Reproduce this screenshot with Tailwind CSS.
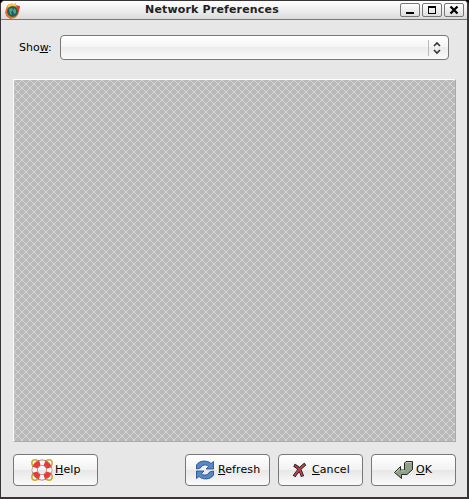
<!DOCTYPE html>
<html lang="en">
<head>
<meta charset="utf-8">
<title>Network Preferences</title>
<script src="https://cdn.jsdelivr.net/npm/@tailwindcss/browser@4"></script>
</head>
<body class="bg-black overflow-hidden text-black text-[11px] leading-[14px] font-['DejaVu_Sans',sans-serif]">
<div class="w-[469px] h-[499px] flex flex-col border border-r-2 border-b-2 border-[#393536] rounded-t-[5px] bg-[#e7e7e7] overflow-hidden">
  <header class="relative h-[19px] shrink-0 flex items-center justify-between pl-1 pr-[3px] border-b border-[#777] bg-linear-to-b from-white via-[#eeeeee] to-[#dadada]">
    <svg class="w-4 h-4 mt-px" viewBox="0 0 16 16">
      <path d="M2 3l2-2 1 1 2-2 1 2 3-2v2l4 1-1 5-1 4-3 3-5 1-4-3-1-4z" fill="#e8732c"/>
      <path d="M2 4l2-3 1 1 2-2 1 2 3-2v3l-4 1z" fill="#f2c94a"/>
      <path d="M12 3l3 0-1 4-1 4-3 3z" fill="#e43d30"/>
      <circle cx="7.5" cy="8.500" r="5" fill="#17615f" stroke="#49602e"/>
      <path d="M4 6l3-1 1 2-2 2 1 3-2-1zM9 5l2 2 0 3-2 1-1-3z" fill="#52a293"/>
    </svg>
    <h1 class="absolute left-[144px] top-[2px] font-bold whitespace-nowrap text-[#222] tracking-[0.17px]">Network Preferences</h1>
    <div class="flex gap-[2px]">
      <button class="w-5 h-[14px] rounded-[2px] border border-[#777] bg-linear-to-b from-white to-[#dedede] flex justify-center"><svg class="w-[18px] h-3 shrink-0" viewBox="0 0 18 12" shape-rendering="crispEdges"><path d="M5 8h8v2H5z"/></svg></button>
      <button class="w-5 h-[14px] rounded-[2px] border border-[#777] bg-linear-to-b from-white to-[#dedede] flex justify-center"><svg class="w-[18px] h-3 shrink-0" viewBox="0 0 18 12" shape-rendering="crispEdges"><path fill-rule="evenodd" d="M5 2h8v8H5zM6 4v5h6V4z"/></svg></button>
      <button class="w-5 h-[14px] rounded-[2px] border border-[#777] bg-linear-to-b from-white to-[#dedede] flex justify-center"><svg class="w-[18px] h-3 shrink-0" viewBox="0 0 18 12"><path d="M5.500 2.500l7 7M12.500 2.500l-7 7" stroke="#000" stroke-width="2.300"/></svg></button>
    </div>
  </header>
  <main class="flex-1 flex flex-col px-3 pt-[15px]">
    <div class="flex items-center h-[25px] pl-[6px] pr-[6px]">
      <label class="w-[41px] shrink-0">Sho<u class="underline-offset-1">w</u>:</label>
      <div class="h-[25px] flex-1 rounded-[4px] border border-[#777] bg-[linear-gradient(#fff,#f4f4f4_50%,#ececec_50%,#fafafa)] flex items-center justify-end">
        <span class="h-4 w-px bg-[#bbb]"></span>
        <svg class="w-[18px] h-4 mr-px" viewBox="0 0 18 16" fill="none" stroke="#333" stroke-width="1.600"><path d="M5 6l3-3 3 3M5 10l3 3 3-3"/></svg>
      </div>
    </div>
    <div class="mt-[19px] w-[443px] h-[363px] border-t border-l border-white border-r border-b border-r-[#aaa] border-b-[#aaa]">
      <svg class="block w-full h-full" shape-rendering="crispEdges">
        <defs><pattern id="mesh" width="8" height="8" patternUnits="userSpaceOnUse">
          <rect width="8" height="8" fill="#b9b9b9"/>
          <path fill="#d7d7d7" d="M0 0h1v1H0zM1 1h1v1H1zM2 2h1v1H2zM3 3h1v1H3zM4 4h1v1H4zM5 5h1v1H5zM6 6h1v1H6zM7 7h1v1H7zM7 0h1v1H7zM6 1h1v1H6zM5 2h1v1H5zM4 3h1v1H4zM3 4h1v1H3zM2 5h1v1H2zM1 6h1v1H1zM0 7h1v1H0z"/>
        </pattern></defs>
        <rect width="100%" height="100%" fill="url(#mesh)"/>
      </svg>
    </div>
    <footer class="flex mt-[12px] w-[443px] tracking-[0.1px]">
      <button class="w-[85px] shrink-0 h-8 rounded-[4px] border border-[#777] bg-[linear-gradient(#fff,#f2f2f2_50%,#e7e7e7_50%,#fafafa)] flex items-center pl-[17px] gap-[2px]">
        <svg class="w-[22px] h-[22px] shrink-0" viewBox="0 0 22 22" fill="none">
          <g stroke="#d0ab25" stroke-width="1.500"><circle cx="4" cy="4" r="3.200"/><circle cx="18" cy="4" r="3.200"/><circle cx="4" cy="18" r="3.200"/><circle cx="18" cy="18" r="3.200"/></g>
          <circle cx="11" cy="11" r="7.300" stroke="#8c7775" stroke-width="6.200"/>
          <circle cx="11" cy="11" r="7.300" stroke="#f8f5f4" stroke-width="5"/>
          <circle cx="11" cy="11" r="7.300" stroke="#e63c35" stroke-width="5" stroke-dasharray="6.800 4.667" stroke-dashoffset="-2.334"/>
        </svg>
        <span><u class="underline-offset-1">H</u>elp</span>
      </button>
      <button class="ml-[87px] w-[85px] shrink-0 h-8 rounded-[4px] border border-[#777] bg-[linear-gradient(#fff,#f2f2f2_50%,#e7e7e7_50%,#fafafa)] flex items-center pl-[9px] gap-[3px]">
        <svg class="w-5 h-5 shrink-0" viewBox="0 0 20 20" fill="#5788c6" stroke="#28508c" stroke-width=".9" stroke-linejoin="round">
          <path d="M1.500 9V5C4 .5 12-.3 16 3.500l2.500-2V9H11l2.500-2.500C11 4 7 4.500 5.500 8z"/>
          <path d="M18.500 11v4C16 19.500 8 20.300 4 16.500l-2.500 2V11H9l-2.500 2.500c2.500 2.500 6.500 2 8-1.500z"/>
        </svg>
        <span><u class="underline-offset-1">R</u>efresh</span>
      </button>
      <button class="ml-2 w-[85px] shrink-0 h-8 rounded-[4px] border border-[#777] bg-[linear-gradient(#fff,#f2f2f2_50%,#e7e7e7_50%,#fafafa)] flex items-center pl-[13px] gap-[5px]">
        <svg class="w-[15px] h-4 shrink-0" viewBox="0 0 15 16" fill="none" stroke-linecap="square">
          <path d="M3.500 4c3 1.500 5 4.500 6.500 9M12 3C8 6 5.500 9 3 13" stroke="#171314" stroke-width="3.300"/>
          <path d="M3.500 4c3 1.500 5 4.500 6.500 9M12 3C8 6 5.500 9 3 13" stroke="#bd4450" stroke-width="1.900"/>
        </svg>
        <span><u class="underline-offset-1">C</u>ancel</span>
      </button>
      <button class="ml-2 w-[85px] shrink-0 h-8 rounded-[4px] border border-[#777] bg-[linear-gradient(#fff,#f2f2f2_50%,#e7e7e7_50%,#fafafa)] flex items-center pl-[22px] gap-[3px]">
        <svg class="w-[19px] h-[18px] shrink-0" viewBox="0 0 19 18" fill="#91a188" stroke="#171b15" stroke-width=".9" stroke-linejoin="round">
          <path d="M10.500 2L12 .5h6.500v8l-5.500 5H7.500v4L.5 11.500l6-6V9h4z"/>
          <path d="M11.500 2.500l1-1h5M11 9.800H7M6 7.500l-4.500 4" stroke="#c8d2c2" fill="none"/>
        </svg>
        <span><u class="underline-offset-1">O</u>K</span>
      </button>
    </footer>
  </main>
</div>
</body>
</html>
